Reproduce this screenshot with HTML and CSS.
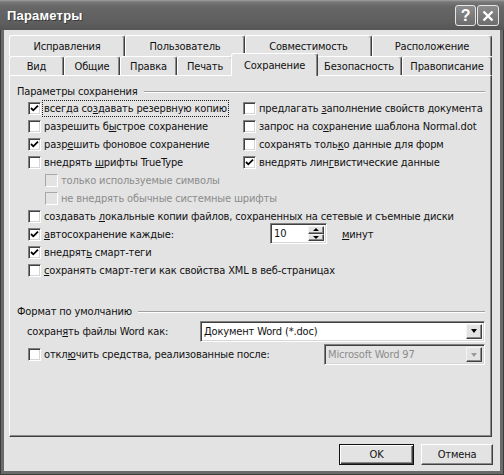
FILE: index.html
```html
<!DOCTYPE html>
<html lang="ru">
<head>
<meta charset="utf-8">
<title>Параметры</title>
<link rel="stylesheet" href="styles.css">
</head>
<body>
<div class="window">
  <div class="titlebar">
    <span class="title">Параметры</span>
    <div class="tb-buttons">
      <span class="tb-btn help">?</span>
      <span class="tb-btn close"><svg width="12" height="12" viewBox="0 0 12 12"><path d="M1.5 1.5 L10.5 10.5 M10.5 1.5 L1.5 10.5" stroke="#fff" stroke-width="2.4" fill="none"/></svg></span>
    </div>
  </div>
  <div class="client">
    <div class="tabrow back">
      <div class="tab">Исправления</div>
      <div class="tab">Пользователь</div>
      <div class="tab">Совместимость</div>
      <div class="tab">Расположение</div>
    </div>
    <div class="tabrow front">
      <div class="tab">Вид</div>
      <div class="tab">Общие</div>
      <div class="tab">Правка</div>
      <div class="tab">Печать</div>
      <div class="tab active">Сохранение</div>
      <div class="tab">Безопасность</div>
      <div class="tab">Правописание</div>
    </div>
    <div class="panel">
      <div class="ghead"><span>Параметры сохранения</span><i class="rule"></i></div>
      <div class="opts">
        <div class="grid2">
          <div class="opt"><span class="box on"><svg width="11" height="11" viewBox="0 0 11 11"><path d="M2 5 L4.3 7.3 L9 2.6" stroke="#000" stroke-width="1.8" fill="none"/></svg></span><span class="lbl focus">всегда со<u>з</u>давать резервную копию</span></div>
          <div class="opt"><span class="box"></span><span class="lbl">предлагать <u>з</u>аполнение свойств документа</span></div>
          <div class="opt"><span class="box"></span><span class="lbl">разрешить б<u>ы</u>строе сохранение</span></div>
          <div class="opt"><span class="box"></span><span class="lbl">запрос на со<u>х</u>ранение шаблона Normal.dot</span></div>
          <div class="opt"><span class="box on"><svg width="11" height="11" viewBox="0 0 11 11"><path d="M2 5 L4.3 7.3 L9 2.6" stroke="#000" stroke-width="1.8" fill="none"/></svg></span><span class="lbl">разр<u>е</u>шить фоновое сохранение</span></div>
          <div class="opt"><span class="box"></span><span class="lbl">сохранять толь<u>к</u>о данные для форм</span></div>
          <div class="opt"><span class="box"></span><span class="lbl">внедрять <u>ш</u>рифты TrueType</span></div>
          <div class="opt"><span class="box on"><svg width="11" height="11" viewBox="0 0 11 11"><path d="M2 5 L4.3 7.3 L9 2.6" stroke="#000" stroke-width="1.8" fill="none"/></svg></span><span class="lbl">внедрять лин<u>г</u>вистические данные</span></div>
        </div>
        <div class="opt indent disabled"><span class="box"></span><span class="lbl">только используемые символы</span></div>
        <div class="opt indent disabled"><span class="box"></span><span class="lbl">не внедрять обычные системные шрифты</span></div>
        <div class="opt"><span class="box"></span><span class="lbl">создавать <u>л</u>окальные копии файлов, сохраненных на сетевые и съемные диски</span></div>
        <div class="opt">
          <span class="opt-fixed autosave"><span class="box on"><svg width="11" height="11" viewBox="0 0 11 11"><path d="M2 5 L4.3 7.3 L9 2.6" stroke="#000" stroke-width="1.8" fill="none"/></svg></span><span class="lbl"><u>а</u>втосохранение каждые:</span></span>
          <span class="spin"><span class="spin-val">10</span><span class="spin-btns"><span class="sb"><i class="tri up"></i></span><span class="sb"><i class="tri"></i></span></span></span>
          <span class="unit"><u>м</u>инут</span>
        </div>
        <div class="opt"><span class="box on"><svg width="11" height="11" viewBox="0 0 11 11"><path d="M2 5 L4.3 7.3 L9 2.6" stroke="#000" stroke-width="1.8" fill="none"/></svg></span><span class="lbl">внедрят<u>ь</u> смарт-теги</span></div>
        <div class="opt"><span class="box"></span><span class="lbl"><u>с</u>охранять смарт-теги как свойства XML в веб-страницах</span></div>
      </div>
      <div class="ghead second"><span>Формат по умолчанию</span><i class="rule"></i></div>
      <div class="frow">
        <span class="frow-label">сохран<u>я</u>ть файлы Word как:</span>
        <span class="combo wide"><span class="combo-val">Документ Word (*.doc)</span><span class="combo-btn"><i class="tri"></i></span></span>
      </div>
      <div class="opts">
        <div class="opt tall">
          <span class="opt-fixed compat"><span class="box"></span><span class="lbl">откл<u>ю</u>чить средства, реализованные после:</span></span>
          <span class="combo narrow disabled"><span class="combo-val">Microsoft Word 97</span><span class="combo-btn"><i class="tri"></i></span></span>
        </div>
      </div>
    </div>
    <div class="actions">
      <button class="btn default ok">OK</button>
      <button class="btn cancel">Отмена</button>
    </div>
  </div>
</div>
</body>
</html>
```
FILE: styles.css
```css
html, body {
  margin: 0;
  padding: 0;
  background: #e3e3e3;
}
body {
  font: 11px "DejaVu Sans Condensed", "DejaVu Sans", sans-serif;
  letter-spacing: -0.15px;
  color: #111;
}
u {
  text-decoration: underline;
  text-underline-offset: 1px;
}
.window {
  width: 504px;
  height: 475px;
  box-sizing: border-box;
  display: flex;
  flex-direction: column;
  background: #6a6a6a;
  box-shadow: inset 1px 0 #3c3c3c, inset -1px 0 #3c3c3c, inset 0 -1px #3c3c3c;
}
.titlebar {
  flex: none;
  height: 30px;
  display: flex;
  align-items: center;
  justify-content: space-between;
  padding: 0 5px 0 7px;
  background: linear-gradient(#a0a0a0 0, #777 2px, #666 7px, #5f5f5f 22px, #555 30px);
}
.title {
  color: #fff;
  font: bold 13px "Liberation Sans", Arial, sans-serif;
  letter-spacing: 0.2px;
  text-shadow: 1px 1px 0 #3a3a3a;
}
.tb-buttons {
  display: flex;
  gap: 1px;
  margin-top: 1px;
}
.tb-btn {
  width: 21px;
  height: 21px;
  box-sizing: border-box;
  border: 1px solid #e6e6e6;
  border-radius: 3px;
  background: linear-gradient(#8c8c8c, #6c6c6c);
  display: flex;
  align-items: center;
  justify-content: center;
  color: #fff;
  font: bold 16px "Liberation Sans", Arial, sans-serif;
}
.tb-btn.close {
  width: 22px;
}
.client {
  flex: 1;
  margin: 0 4px 4px;
  background: #e3e3e3;
  padding: 5px 7px 6px 5px;
  display: flex;
  flex-direction: column;
}
.tabrow {
  display: grid;
  width: 483px;
}
.tabrow.back {
  grid-template-columns: 116px 120px 127px 120px;
  height: 21px;
}
.tabrow.front {
  grid-template-columns: 55px 56px 57px 56px 83px 86px 90px;
  height: 19px;
}
.tab {
  box-sizing: border-box;
  border-top: 1px solid #fff;
  border-left: 1px solid #fff;
  border-right: 1px solid #404040;
  box-shadow: inset -1px 0 #8a8a8a;
  border-radius: 3px 3px 0 0;
  background: #e3e3e3;
  display: flex;
  align-items: center;
  justify-content: center;
  white-space: nowrap;
}
.tab.active {
  position: relative;
  z-index: 1;
  margin: -3px -2px -1px;
}
.panel {
  box-sizing: border-box;
  width: 483px;
  height: 362px;
  border: 1px solid;
  border-color: #fff #404040 #404040 #fff;
  box-shadow: inset -1px -1px #8a8a8a;
  padding: 8px 6px 0 7px;
}
.ghead {
  display: flex;
  align-items: center;
  height: 15px;
  line-height: 15px;
}
.ghead.second {
  margin-top: 25px;
}
.rule {
  flex: 1;
  height: 0;
  border-top: 1px solid #a0a0a0;
  border-bottom: 1px solid #fff;
  margin-left: 6px;
}
.opts {
  padding-left: 11px;
}
.grid2 {
  display: grid;
  grid-template-columns: 215px auto;
}
.opt {
  display: flex;
  align-items: center;
  height: 18px;
  white-space: nowrap;
}
.opt.tall {
  height: 21px;
  margin-top: 2px;
}
.opt.indent {
  padding-left: 17px;
}
.opt-fixed {
  display: flex;
  align-items: center;
}
.opt-fixed.autosave {
  width: 242px;
}
.opt-fixed.compat {
  width: 296px;
}
.box {
  flex: none;
  width: 13px;
  height: 13px;
  box-sizing: border-box;
  margin-right: 1px;
  border: 1px solid;
  border-color: #808080 #fff #fff #808080;
  box-shadow: inset 1px 1px #404040, inset -1px -1px #d6d6d6;
  background: #fff;
  display: flex;
  align-items: center;
  justify-content: center;
}
.box svg {
  display: block;
}
.lbl {
  line-height: 15px;
  padding: 0 1px;
  border: 1px dotted transparent;
}
.lbl.focus {
  border-color: #222;
}
.opt.disabled .box {
  background: #e3e3e3;
  border-color: #a8a8a8 #fff #fff #a8a8a8;
  box-shadow: none;
}
.opt.disabled .lbl {
  color: #8c8c8c;
}
.spin {
  box-sizing: border-box;
  width: 57px;
  height: 21px;
  margin: -2px 0 -1px;
  border: 1px solid;
  border-color: #808080 #fff #fff #808080;
  box-shadow: inset 1px 1px #404040, inset -1px -1px #d6d6d6;
  background: #fff;
  display: flex;
  align-items: stretch;
  padding: 2px 2px 2px 3px;
}
.spin-val {
  flex: 1;
  line-height: 15px;
}
.spin-btns {
  width: 16px;
  display: flex;
  flex-direction: column;
}
.sb {
  flex: 1;
  box-sizing: border-box;
  background: #e3e3e3;
  border: 1px solid;
  border-color: #f4f4f4 #404040 #404040 #f4f4f4;
  box-shadow: inset -1px -1px #8a8a8a;
  display: flex;
  align-items: center;
  justify-content: center;
}
.tri {
  width: 0;
  height: 0;
  border-left: 3.5px solid transparent;
  border-right: 3.5px solid transparent;
  border-top: 4px solid #000;
}
.sb .tri {
  border-left-width: 3px;
  border-right-width: 3px;
  border-top-width: 3px;
}
.sb .tri.up {
  border-top: 0;
  border-bottom: 3px solid #000;
}
.unit {
  margin-left: 15px;
}
.frow {
  display: flex;
  align-items: center;
  height: 22px;
  margin-top: 1px;
  padding-left: 10px;
  white-space: nowrap;
}
.frow-label {
  width: 173px;
}
.combo {
  box-sizing: border-box;
  height: 21px;
  border: 1px solid;
  border-color: #808080 #fff #fff #808080;
  box-shadow: inset 1px 1px #404040, inset -1px -1px #d6d6d6;
  background: #fff;
  display: flex;
  align-items: stretch;
  padding: 2px;
}
.combo.wide {
  width: 285px;
}
.combo.narrow {
  width: 161px;
}
.combo-val {
  flex: 1;
  line-height: 15px;
  padding-left: 1px;
}
.combo-btn {
  width: 16px;
  box-sizing: border-box;
  background: #e3e3e3;
  border: 1px solid;
  border-color: #f4f4f4 #404040 #404040 #f4f4f4;
  box-shadow: inset -1px -1px #8a8a8a;
  display: flex;
  align-items: center;
  justify-content: center;
}
.combo.disabled {
  background: #e3e3e3;
}
.combo.disabled .combo-val {
  color: #8c8c8c;
}
.combo.disabled .tri {
  border-top-color: #9a9a9a;
}
.actions {
  display: flex;
  justify-content: flex-end;
  gap: 7px;
  margin-top: 7px;
}
.btn {
  height: 21px;
  box-sizing: border-box;
  font: inherit;
  letter-spacing: inherit;
  color: #111;
  background: #e3e3e3;
  border: 1px solid;
  border-color: #fff #404040 #404040 #fff;
  box-shadow: inset -1px -1px #8a8a8a;
  padding: 0;
}
.btn.ok {
  width: 75px;
  border-color: #111;
  box-shadow: inset 1px 1px #fff, inset -1px -1px #404040, inset -2px -2px #8a8a8a;
}
.btn.cancel {
  width: 72px;
}
```
